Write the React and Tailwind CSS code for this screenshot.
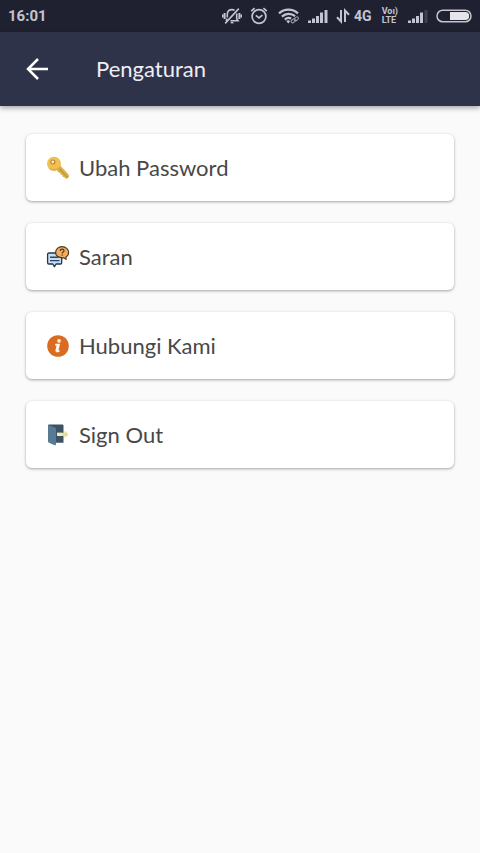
import React from 'react';

const VibrateIcon = () => (
  <svg className="h-5 w-5" viewBox="0 0 20 20" fill="none" stroke="currentColor" strokeWidth="1.6">
    <path d="M5.3 11.5V8.5C5.3 5.500 7.300 3.600 10 3.600c1 0 1.900.3 2.600.8M14.700 7.500v5.300l1.300 1.900H8.500M5.300 12.800L4 14.700" />
    <path d="M8.7 16.6h2.800" />
    <path d="M3.2 17.4L16.8 2.6" />
    <path d="M2.6 7v6M17.4 7v6" strokeWidth="2" />
    <path d="M.8 8.6v2.800M19.2 8.6v2.800" />
  </svg>
);

const AlarmIcon = () => (
  <svg className="h-5 w-[18px]" viewBox="0 0 18 20" fill="none" stroke="currentColor" strokeWidth="1.7">
    <circle cx="9" cy="10.5" r="6.9" />
    <path d="M5.8 9.400L9 12l3.400-2.800" />
    <path d="M1.2 5.200L4.600 2.200M16.800 5.200l-3.400-3" />
  </svg>
);

const WifiIcon = () => (
  <svg className="h-5 w-[22px]" viewBox="0 0 22 20" fill="none" stroke="currentColor" strokeWidth="2.2">
    <path d="M1 7.400c5.400-5 13.600-5 19 0" />
    <path d="M3.900 10.600c3.800-3.600 9.400-3.600 13.200-.4" />
    <path d="M6.800 13.600c2-1.900 4.400-2 6.400-1" />
    <path d="M8.200 14.900l2.200 2.500 1.800-2.300c-1.200-1-2.800-1-4 -.2z" fill="currentColor" stroke="none" />
    <g strokeWidth="1.1" opacity=".75">
      <rect x="13" y="13.4" width="4.6" height="2.8" rx="1.4" transform="rotate(-38 15.3 14.8)" />
      <rect x="16" y="11.4" width="4.6" height="2.8" rx="1.4" transform="rotate(-38 18.3 12.8)" />
    </g>
  </svg>
);

const SignalIcon = ({ weak }) => (
  <svg className="h-5 w-5" viewBox="0 0 20 20" fill="currentColor">
    <rect x="0" y="14.5" width="3" height="2.5" />
    <rect x="4" y="12.5" width="3" height="4.5" />
    <rect x="8" y="10" width="3" height="7" />
    <rect x="12" y="6.5" width="3" height="10.5" />
    <rect x="16.5" y="4" width="3" height="13" opacity={weak ? 0.2 : 1} />
  </svg>
);

const DataIcon = () => (
  <svg className="h-5 w-[14px]" viewBox="0 0 14 20" fill="none" stroke="currentColor" strokeWidth="2">
    <path d="M5 4v11.5L1 11.2M9 16V4.5l4 4.3" />
  </svg>
);

const BatteryIcon = () => (
  <svg className="h-5 w-9" viewBox="0 0 36 20" fill="none">
    <rect x="1" y="4.2" width="34" height="11.6" rx="5.8" stroke="currentColor" strokeWidth="1.5" />
    <path d="M14 6h15.200a4 4 0 0 1 0 8H14z" fill="#e4e4ea" />
  </svg>
);

const BackIcon = () => (
  <svg className="h-6 w-6" viewBox="0 0 24 24" fill="none" stroke="currentColor" strokeWidth="2.5">
    <path d="M22 12H3M12 2L2 12l10 10" />
  </svg>
);

const KeyIcon = () => (
  <svg className="h-6 w-6" viewBox="0 0 24 24">
    <path d="M10 13.200l4-4 8.800 9.600c.8 2-.4 3.900-2.700 4l-1.900-1.600-1.500-.4-.4-1.700-1.700-.5-.4-1.700-1.900-.6z" fill="#d9b24a" />
    <path d="M12.600 12l9 9.600" stroke="#b7953f" strokeWidth="1.2" />
    <circle cx="8" cy="7.8" r="7" fill="#efc151" />
    <path d="M2.200 11.600a7 7 0 0 0 12.600-2c-3 3.600-8 4.600-12.600 2z" fill="#e0ae44" />
    <circle cx="6.8" cy="6" r="2" fill="#fbeecb" stroke="#c27b35" strokeWidth="1.2" />
  </svg>
);

const FeedbackIcon = () => (
  <svg className="h-6 w-6" viewBox="0 0 24 24" strokeLinejoin="round">
    <path d="M2.800 8h11.700a1.200 1.200 0 0 1 1.200 1.200v8.600a1.200 1.200 0 0 1-1.200 1.200H10l-1.500 2.800L6.800 19h-4a1.200 1.200 0 0 1-1.200-1.200V9.200A1.200 1.200 0 0 1 2.800 8z" fill="#c5def5" stroke="#263445" strokeWidth="1.3" />
    <path d="M4 12.200h8.500M4 15.600h9.500" stroke="#30455e" strokeWidth="1.4" />
    <path d="M16 1.700c3.800 0 6.600 2.500 6.600 5.700 0 2.100-1 3.700-2.700 4.700l.2 2.200-2.500-1.500c-4.600.4-8-1.800-8-5.400 0-3.200 2.800-5.700 6.400-5.700z" fill="#f3ae55" stroke="#4d392a" strokeWidth="1.2" />
    <path d="M14.300 5.900c0-2.300 3.700-2.300 3.700-.2 0 1.400-1.800 1.300-1.800 2.800M16.200 9.500v1.200" fill="none" stroke="#4d3520" strokeWidth="1.2" />
  </svg>
);

const InfoIcon = () => (
  <svg className="h-6 w-6" viewBox="0 0 24 24">
    <circle cx="12" cy="12" r="10.8" fill="#d96c21" />
    <circle cx="13" cy="6.9" r="1.8" fill="#fff5e8" />
    <path d="M9.400 9.800h4.700l-1.600 6.400h1.300l-.4 1.500c-1.800 1-4.500.8-3.900-1.700l1-4.500H9z" fill="#fff5e8" />
  </svg>
);

const SignOutIcon = () => (
  <svg className="h-6 w-6" viewBox="0 0 24 24">
    <path d="M3 1.500h13.500a1 1 0 0 1 1 1v17.200H9L2 18V2.500a1 1 0 0 1 1-1z" fill="#3c5365" />
    <path d="M2.200 1.900L9 4.600c.6.200 1 .7 1 1.400v15.300c0 .8-.6 1.200-1.300.9L3 19.700c-.6-.2-1-.7-1-1.300V2.500z" fill="#587a94" />
    <path d="M11 9.800h7.700V7.600l3.800 3.800-3.800 3.800V13H11z" fill="#eadf8d" />
    <path d="M11 9.800h5v3.200h-5z" fill="#f3edbd" />
  </svg>
);

const menu = [
  { label: 'Ubah Password', Icon: KeyIcon },
  { label: 'Saran', Icon: FeedbackIcon },
  { label: 'Hubungi Kami', Icon: InfoIcon },
  { label: 'Sign Out', Icon: SignOutIcon },
];

const StatusBar = () => (
  <div className="flex h-8 items-center justify-between bg-[#1f2131] px-2 font-['Roboto',sans-serif] text-[#c4c4d0]">
    <span className="text-[15px] leading-5 font-bold">16:01</span>
    <div className="flex items-center gap-2">
      <VibrateIcon />
      <AlarmIcon />
      <div className="flex pl-0.5"><WifiIcon /></div>
      <SignalIcon />
      <div className="flex items-center gap-1">
        <DataIcon />
        <span className="text-sm font-bold">4G</span>
      </div>
      <div className="flex flex-col px-0.5 text-[9px] leading-[9px] font-bold">
        <span>Vo&#x0131;)</span>
        <span>LTE</span>
      </div>
      <SignalIcon weak />
      <BatteryIcon />
    </div>
  </div>
);

const App = () => {
  return (
    <div className="min-h-screen bg-[#fafafa] font-['Lato',sans-serif]">
      <StatusBar />

      <header className="flex h-[74px] items-center bg-[#2f334a] px-[26px] text-white shadow-[0_2px_5px_rgba(0,0,0,0.35)]">
        <button type="button" aria-label="Kembali">
          <BackIcon />
        </button>
        <h1 className="ml-[46px] text-[22px] leading-7 text-[#eeeef4]">Pengaturan</h1>
      </header>

      <main className="flex flex-col gap-[22px] px-[26px] py-7">
        {menu.map(({ label, Icon }) => (
          <button
            key={label}
            type="button"
            className="flex h-[67px] w-full items-center gap-[9px] rounded-md bg-white px-5 text-left text-[22px] leading-7 text-[#484848] shadow-[0_1px_3px_rgba(0,0,0,0.35)]"
          >
            <Icon />
            <span>{label}</span>
          </button>
        ))}
      </main>
    </div>
  );
};

export default App;
